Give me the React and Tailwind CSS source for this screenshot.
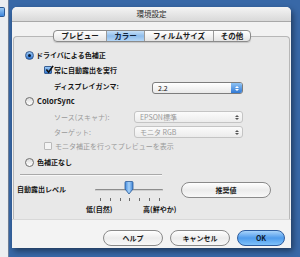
import React from "react";

/* ================= SMALL CONTROLS ================= */
function Radio({ on }) {
  if (on) {
    return (
      <span className="w-[9px] h-[9px] shrink-0 rounded-full border border-[#35598c] bg-gradient-to-b from-[#9ccaf6] to-[#2c74d0] flex items-center justify-center">
        <span className="w-[3px] h-[3px] rounded-full bg-[#0d1c33]" />
      </span>
    );
  }
  return (
    <span className="w-[9px] h-[9px] shrink-0 rounded-full border border-[#6f6f6f] bg-gradient-to-b from-[#dcdcdc] to-white" />
  );
}

function Check({ on, disabled }) {
  if (on) {
    return (
      <span className="w-[8px] h-[8px] shrink-0 rounded-[1px] border border-[#3a5f93] bg-gradient-to-b from-[#9ccaf6] to-[#2c74d0] relative">
        <svg viewBox="0 0 10 10" className="absolute -top-[2px] left-0 w-[9px] h-[9px]">
          <path d="M1.5 5 L4 8 L9 1" fill="none" stroke="#111" strokeWidth="1.8" />
        </svg>
      </span>
    );
  }
  return (
    <span
      className={`w-[8px] h-[8px] shrink-0 rounded-[1px] border ${
        disabled ? "border-[#b9b9b9] bg-[#f4f4f4]" : "border-[#707070] bg-white"
      }`}
    />
  );
}

function Select({ value, active, width }) {
  return (
    <div
      className={`${width} h-[12px] rounded-[3px] border flex items-center justify-between pl-[5px] ${
        active
          ? "border-[#7d7d7d] bg-gradient-to-b from-[#ffffff] to-[#e9e9e9] text-[#111]"
          : "border-[#c4c4c4] bg-gradient-to-b from-[#fbfbfb] to-[#ececec] text-[#9a9a9a]"
      }`}
    >
      <span className="leading-none">{value}</span>
      {active ? (
        <span className="w-[11px] h-full rounded-r-[2px] bg-gradient-to-b from-[#8ec3f4] to-[#2f78d4] flex flex-col items-center justify-center gap-[1px]">
          <svg viewBox="0 0 6 3" className="w-[4px] h-[2px]"><path d="M0 3 L3 0 L6 3Z" fill="#fff" /></svg>
          <svg viewBox="0 0 6 3" className="w-[4px] h-[2px]"><path d="M0 0 L3 3 L6 0Z" fill="#fff" /></svg>
        </span>
      ) : (
        <span className="w-[11px] h-full flex flex-col items-center justify-center gap-[1px]">
          <svg viewBox="0 0 6 3" className="w-[4px] h-[2px]"><path d="M0 3 L3 0 L6 3Z" fill="#555" /></svg>
          <svg viewBox="0 0 6 3" className="w-[4px] h-[2px]"><path d="M0 0 L3 3 L6 0Z" fill="#555" /></svg>
        </span>
      )}
    </div>
  );
}

function Pill({ label, blue, width }) {
  return (
    <button
      className={`${width} h-[16px] rounded-full border flex items-center justify-center font-bold leading-none ${
        blue
          ? "border-[#2d5c9e] bg-gradient-to-b from-[#a7d3fa] via-[#4f9cec] to-[#7ec1fa] text-[#0c1a2e]"
          : "border-[#8a8a8a] bg-gradient-to-b from-[#ffffff] via-[#ececec] to-[#f8f8f8] text-[#1a1a1a]"
      }`}
    >
      {label}
    </button>
  );
}

/* ================= MAIN ================= */
export default function App() {
  const tabs = [
    { label: "プレビュー", w: "w-[52px]" },
    { label: "カラー", w: "w-[38px]", on: true },
    { label: "フィルムサイズ", w: "w-[69px]" },
    { label: "その他", w: "w-[37px]" },
  ];

  return (
    <div className="w-[300px] h-[257px] overflow-hidden bg-[#3868a7] flex font-['Noto_Sans_CJK_JP','Noto_Sans',sans-serif] text-[7px]">
      {/* window behind */}
      <div className="w-[9px] h-full bg-[#eceef1] border-r border-[#6e7f99] shrink-0">
        <div className="mt-[7px] w-[5px] h-[10px] rounded-r-[2px] border border-l-0 border-[#2d5a95] bg-gradient-to-b from-[#9bc9f3] to-[#3d86dc]" />
      </div>

      {/* DIALOG */}
      <div className="ml-[3px] mt-[7px] w-[279px] h-[241px] flex flex-col bg-[#f2f2f2] rounded-t-[5px] shadow-[2px_3px_6px_rgba(0,0,0,0.45)]">
        {/* title */}
        <div className="h-[15px] rounded-t-[5px] bg-gradient-to-b from-[#f4f4f4] to-[#d9d9d9] border-b border-[#a8a8a8] flex items-center justify-center text-[#2a2a2a] text-[7.5px]">
          環境設定
        </div>

        {/* tabs */}
        <div className="mt-[8px] flex justify-center relative z-10 pl-[1px]">
          <div className="flex h-[12px] rounded-[4px] border border-[#8b8b8b] overflow-hidden bg-gradient-to-b from-white to-[#e4e4e4] shadow-[0_1px_1px_rgba(0,0,0,0.15)]">
            {tabs.map((t, i) => (
              <div
                key={t.label}
                className={`${t.w} flex items-center justify-center font-bold text-[7.5px] leading-none ${
                  i > 0 ? "border-l border-[#9a9a9a]" : ""
                } ${t.on ? "bg-gradient-to-b from-[#c6e0f8] via-[#8fbdec] to-[#b4d6f6] text-[#10243d]" : "text-[#1c1c1c]"}`}
              >
                {t.label}
              </div>
            ))}
          </div>
        </div>

        {/* GROUP BOX */}
        <div className="-mt-[6px] ml-[1px] mr-[1px] h-[183px] rounded-t-[4px] border border-b-0 border-[#b7b7b7] bg-[#e8e8e8] flex flex-col">
          <div className="mt-[13px] h-[10px] pl-[11px] flex items-center gap-[2px] font-bold text-[#151515]">
            <Radio on />
            <span>ドライバによる色補正</span>
          </div>

          <div className="mt-[5px] h-[10px] pl-[30px] flex items-center gap-[2px] font-bold text-[#151515]">
            <Check on />
            <span>常に自動露出を実行</span>
          </div>

          <div className="mt-[7px] h-[12px] pl-[40px] flex items-center">
            <span className="w-[98px] font-bold text-[#151515] -mt-[3px]">ディスプレイガンマ:</span>
            <Select value="2.2" active width="w-[91px]" />
          </div>

          <div className="mt-[2px] h-[10px] pl-[11px] flex items-center gap-[3px] font-bold text-[#151515]">
            <Radio />
            <span className="text-[7.5px]">ColorSync</span>
          </div>

          <div className="mt-[5px] h-[12px] pl-[40px] flex items-center text-[#9a9a9a]">
            <span className="w-[80px]">ソース(スキャナ):</span>
            <Select value="EPSON標準" width="w-[109px]" />
          </div>

          <div className="mt-[3px] h-[12px] pl-[40px] flex items-center text-[#9a9a9a]">
            <span className="w-[80px]">ターゲット:</span>
            <Select value="モニタ RGB" width="w-[109px]" />
          </div>

          <div className="mt-[3px] h-[10px] pl-[30px] flex items-center gap-[3px] text-[#9a9a9a]">
            <Check disabled />
            <span>モニタ補正を行ってプレビューを表示</span>
          </div>

          <div className="mt-[6px] h-[10px] pl-[11px] flex items-center gap-[3px] font-bold text-[#151515]">
            <Radio />
            <span>色補正なし</span>
          </div>

          <div className="mt-[7px] ml-[6px] w-[142px] h-[1px] bg-[#a9a9a9] border-b border-[#f8f8f8] box-content" />

          {/* auto exposure */}
          <div className="mt-[6px] h-[16px] flex items-center">
            <span className="w-[79px] pl-[3px] font-bold text-[#151515] -mt-[1px]">自動露出レベル</span>
            <div className="w-[72px] h-full relative">
              <div className="absolute left-[2px] right-[2px] top-[7px] h-[2px] rounded-full bg-[#8d8d8d] border-b border-[#cfcfcf]" />
              <svg viewBox="0 0 10 14" className="absolute left-[31px] -top-[1px] w-[10px] h-[14px]">
                <defs>
                  <linearGradient id="thumb" x1="0" y1="0" x2="1" y2="0">
                    <stop offset="0" stopColor="#3f88de" />
                    <stop offset="0.5" stopColor="#a6d1f8" />
                    <stop offset="1" stopColor="#3a80d6" />
                  </linearGradient>
                </defs>
                <path d="M1 1.5 Q1 0.5 2 0.5 L8 0.5 Q9 0.5 9 1.5 L9 8 L5 13 L1 8 Z" fill="url(#thumb)" stroke="#2b5a98" strokeWidth="0.8" />
              </svg>
            </div>
            <div className="ml-[16px]">
              <Pill label="推奨値" width="w-[90px]" />
            </div>
          </div>

          <div className="mt-[0px] ml-[86px] w-[60px] flex justify-between">
            {[0, 1, 2, 3, 4, 5, 6].map((i) => (
              <span key={i} className="w-[1px] h-[3px] bg-[#6a6a6a]" />
            ))}
          </div>

          <div className="mt-[3px] pl-[72px] flex font-bold text-[#151515]">
            <span className="w-[57px]">低(自然)</span>
            <span>高(鮮やか)</span>
          </div>
        </div>

        {/* BUTTONS */}
        <div className="flex-1 bg-[#f3f3f3] border-t border-[#d8d8d8] flex items-start pt-[10px] pl-[91px] gap-[7px]">
          <Pill label="ヘルプ" width="w-[60px]" />
          <Pill label="キャンセル" width="w-[60px]" />
          <Pill label="OK" blue width="w-[48px]" />
        </div>
      </div>
    </div>
  );
}
